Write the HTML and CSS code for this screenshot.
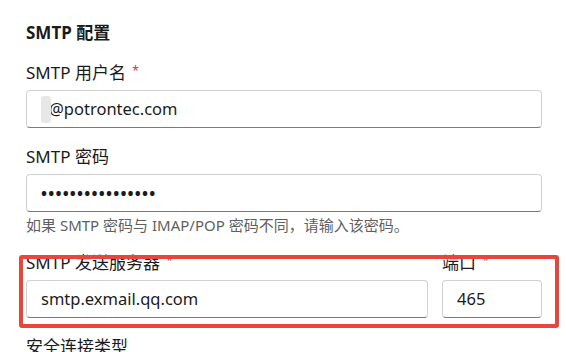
FILE: index.html
```html
<!DOCTYPE html>
<html lang="zh-CN">
<head>
  <meta charset="UTF-8">
  <title>SMTP 配置</title>
  <link rel="stylesheet" href="styles.css">
</head>
<body>
<div class="panel">
  <h3 class="section-title">SMTP 配置</h3>

  <!-- 用户名 -->
  <div class="field">
    <label class="label">SMTP 用户名 <span class="req">*</span></label>
    <div class="input"><span class="masked">a</span>@potrontec.com</div>
  </div>

  <!-- 密码 -->
  <div class="field">
    <label class="label">SMTP 密码</label>
    <div class="input dots">&bull;&bull;&bull;&bull;&bull;&bull;&bull;&bull;&bull;&bull;&bull;&bull;&bull;&bull;&bull;&bull;</div>
    <p class="hint">如果 SMTP 密码与 IMAP/POP 密码不同，请输入该密码。</p>
  </div>

  <!-- 服务器 + 端口 -->
  <div class="field row">
    <div class="col">
      <label class="label">SMTP 发送服务器 <span class="req">*</span></label>
      <div class="input">smtp.exmail.qq.com</div>
    </div>
    <div class="col">
      <label class="label">端口 <span class="req">*</span></label>
      <div class="input">465</div>
    </div>
    <div class="highlight"></div>
  </div>

  <div class="field">
    <label class="label">安全连接类型</label>
  </div>
</div>
</body>
</html>
```

FILE: styles.css
```css
/* page */
body {
  margin: 0;
  background: #fff;
  font-family: "Noto Sans", "Noto Sans CJK SC", sans-serif;
  color: #1b1b1b;
  overflow: hidden;
}
.panel {
  width: 516px;
  padding: 22px 0 0 26px;
}
.section-title {
  margin: 0 0 18px;
  font-size: 17px;
  line-height: 22px;
  font-weight: 700;
}

/* fields */
.field {
  margin-bottom: 18px;
}
.label {
  display: block;
  font-size: 17px;
  line-height: 22px;
  margin-bottom: 6px;
}
.req {
  color: #d13438;
  font-size: 12px;
  vertical-align: top;
  position: relative;
  top: -2px;
  margin-left: 2px;
}
.input {
  box-sizing: border-box;
  height: 38px;
  border: 1px solid #d1d1d1;
  border-bottom-color: #7a7a7a;
  border-radius: 4px;
  padding: 0 14px;
  font-size: 16.5px;
  line-height: 36px;
  background: #fff;
  white-space: nowrap;
  overflow: hidden;
}
.masked {
  display: inline-block;
  width: 10px;
  height: 27px;
  margin-right: -2px;
  vertical-align: middle;
  background: #e7e7e7;
  border-radius: 3px;
  color: transparent;
  position: relative;
  top: -1px;
}
.dots {
  letter-spacing: 1.2px;
  font-size: 16px;
  font-weight: 700;
}
.hint {
  margin: 4px 0 0;
  font-size: 15px;
  line-height: 18px;
  color: #5f5f5f;
}

/* server / port row */
.row {
  position: relative;
  display: grid;
  grid-template-columns: 1fr 100px;
  column-gap: 14px;
}
.highlight {
  position: absolute;
  left: -7px;
  top: 3px;
  width: 540px;
  height: 73px;
  box-sizing: border-box;
  border: 4px solid #e8453c;
  border-radius: 3px;
  pointer-events: none;
}
```
